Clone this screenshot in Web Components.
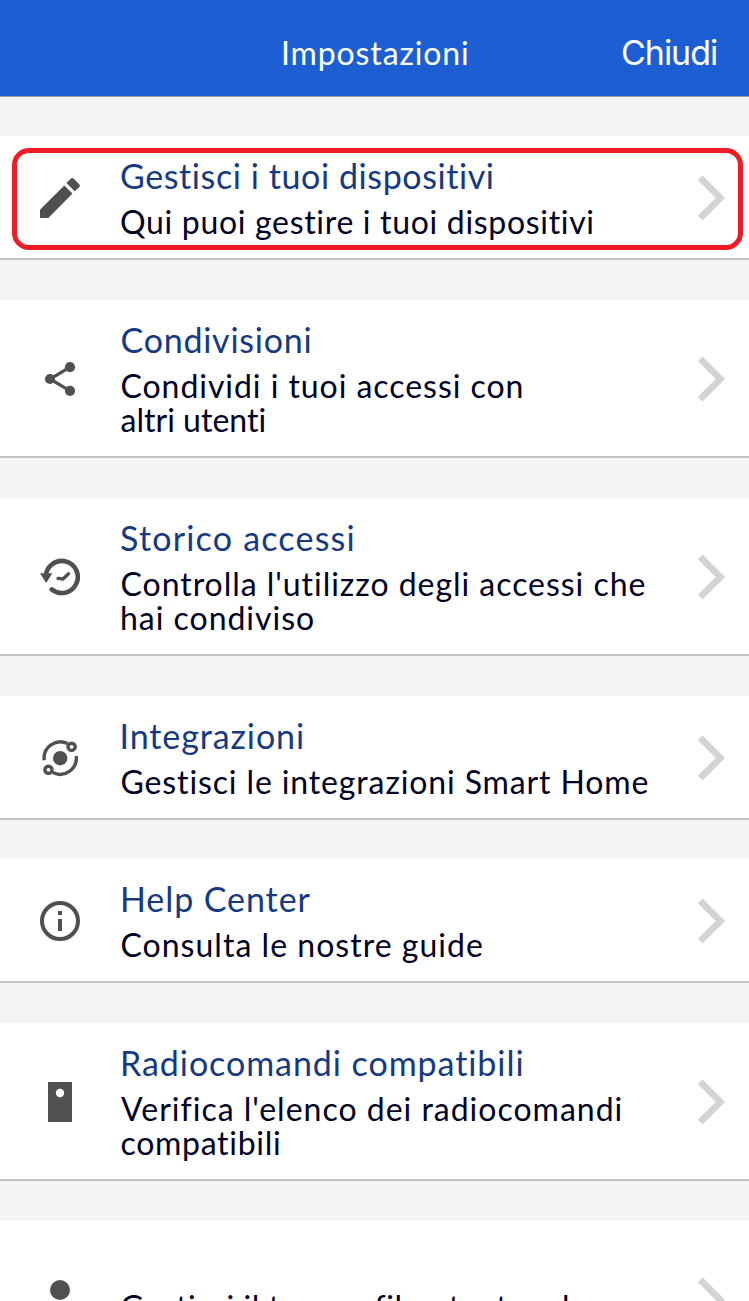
<!DOCTYPE html>
<html lang="it">
<head>
<meta charset="utf-8">
<title>Impostazioni</title>
<style>
  html, body {
    margin: 0;
    height: 1301px;
    overflow: hidden;
    background: #f4f4f4;
    font-family: Lato, "Open Sans", sans-serif;
  }
</style>
</head>
<body>
<settings-screen>
  <nav-bar slot="bar">
    <fit-line from="283" to="467">Impostazioni</fit-line>
    <fit-line slot="action" from="623" to="717">Chiudi</fit-line>
  </nav-bar>

  <settings-row icon="edit" highlighted>
    <fit-line slot="title" from="121" to="494">Gestisci i tuoi dispositivi</fit-line>
    <fit-line from="121" to="593.5">Qui puoi gestire i tuoi dispositivi</fit-line>
  </settings-row>
  <settings-row icon="share">
    <fit-line slot="title" from="121.5" to="310.5">Condivisioni</fit-line>
    <fit-line from="121.5" to="521.5">Condividi i tuoi accessi con</fit-line>
    <fit-line from="121.5" to="265">altri utenti</fit-line>
  </settings-row>
  <settings-row icon="history">
    <fit-line slot="title" from="121" to="353.5">Storico accessi</fit-line>
    <fit-line from="121.5" to="645">Controlla l'utilizzo degli accessi che</fit-line>
    <fit-line from="122" to="313">hai condiviso</fit-line>
  </settings-row>
  <settings-row icon="integration" style="--gap: 39px">
    <fit-line slot="title" from="122.5" to="303">Integrazioni</fit-line>
    <fit-line from="121.5" to="648">Gestisci le integrazioni Smart Home</fit-line>
  </settings-row>
  <settings-row icon="info">
    <fit-line slot="title" from="123" to="310.5">Help Center</fit-line>
    <fit-line from="121.5" to="482">Consulta le nostre guide</fit-line>
  </settings-row>
  <settings-row icon="remote">
    <fit-line slot="title" from="123" to="523">Radiocomandi compatibili</fit-line>
    <fit-line from="121" to="620">Verifica l'elenco dei radiocomandi</fit-line>
    <fit-line from="121.5" to="279.5">compatibili</fit-line>
  </settings-row>
  <settings-row icon="person">
    <fit-line from="121.5" to="567.5">Gestisci il tuo profilo utente ed</fit-line>
    <fit-line></fit-line>
  </settings-row>
</settings-screen>

<script>
// 40x40 glyphs, drawn with currentColor
const ICONS = {
  edit: `<path d="M0 31.7V40h8.3L32.5 15.6l-8.2-8.2zM39.2 9.3c.9-.9.9-2.2 0-3.1L33.8.7c-.9-.9-2.2-.9-3.1 0L26.4 5l8.3 8.3z"/>`,
  share: `<path d="M30 8.2L10 20l20 11.8" fill="none" stroke="currentColor" stroke-width="3.2"/>
    <circle cx="30" cy="8.2" r="5.1"/><circle cx="10" cy="20" r="5.1"/><circle cx="30" cy="31.8" r="5.1"/>`,
  history: `<path d="M5.8 19.2A16 16 0 1 1 11.7 32.4" fill="none" stroke="currentColor" stroke-width="4.6" stroke-linecap="round"/>
    <path d="M0 16.2h12.4L6.2 26z"/>
    <path d="M18 21.4l5 .6 5.5-5.3" fill="none" stroke="currentColor" stroke-width="3.4" stroke-linecap="round" stroke-linejoin="round"/>`,
  integration: `<g fill="none" stroke="currentColor" stroke-width="3.4">
      <path d="M4.2 22.2A16.3 16.3 0 0 1 27.6 5.6M36.2 18A16.3 16.3 0 0 1 12.8 34.6"/>
      <circle cx="31.6" cy="8.8" r="3.6"/><circle cx="8.5" cy="31.8" r="3.6"/>
    </g><circle cx="20.2" cy="20.2" r="7.2"/>`,
  info: `<circle cx="20" cy="20" r="18" fill="none" stroke="currentColor" stroke-width="4"/><path d="M18 10h4v4h-4zM18 18h4v12h-4z"/>`,
  remote: `<path fill-rule="evenodd" d="M8 0h24v40H8zM20 6.8a4.2 4.2 0 1 0 0 8.4 4.2 4.2 0 0 0 0-8.4z"/>`,
  person: `<circle cx="20" cy="10" r="10"/><path d="M0 40v-5c0-7 13-10 20-10s20 3 20 10v5z"/>`,
};

// One line of text, tracked so that its ink runs from "from" to "to"
class FitLine extends HTMLElement {
  constructor() {
    super();
    const shadow = this.attachShadow({ mode: "open" });
    shadow.innerHTML = `
      <style>
        :host {
          display: block;
          white-space: nowrap;
          min-height: 1lh;
          font-kerning: normal;
          font-variant-ligatures: none;
        }
      </style>
      <slot></slot>`;
  }

  connectedCallback() {
    const text = this.textContent;
    if (!text) return;
    const from = parseFloat(this.getAttribute("from"));
    const to = parseFloat(this.getAttribute("to"));
    const css = getComputedStyle(this);
    const ctx = document.createElement("canvas").getContext("2d");
    ctx.font = `${css.fontWeight} ${css.fontSize} ${css.fontFamily}`;
    const ink = ctx.measureText(text);
    const natural = ink.actualBoundingBoxLeft + ink.actualBoundingBoxRight;
    const spacing = (to - from - natural) / (text.length - 1);
    this.style.letterSpacing = `${spacing.toFixed(3)}px`;
    this.style.marginLeft = `${(from + ink.actualBoundingBoxLeft).toFixed(2)}px`;
  }
}

class NavBar extends HTMLElement {
  constructor() {
    super();
    const shadow = this.attachShadow({ mode: "open" });
    shadow.innerHTML = `
      <style>
        :host {
          display: grid;
          align-items: center;
          box-sizing: border-box;
          height: 97px;
          padding-top: 9px;
          border-bottom: 1px solid #9a9fa8;
          background: #1d5fd3;
          color: #fff;
        }
        slot {
          display: block;
          grid-area: 1 / 1;
          line-height: 40px;
        }
        .title { font-size: 32px; }
        .action {
          font-family: Inter, Roboto, sans-serif;
          font-size: 34px;
          font-weight: 400;
        }
      </style>
      <slot class="title"></slot>
      <slot class="action" name="action"></slot>`;
  }
}

class SettingsRow extends HTMLElement {
  constructor() {
    super();
    const shadow = this.attachShadow({ mode: "open" });
    shadow.innerHTML = `
      <style>
        :host {
          display: grid;
          grid-template-columns: minmax(0, 1fr);
          align-items: center;
          position: relative;
          margin-bottom: var(--gap, 40px);
          border-bottom: 2px solid #c4c4c4;
          background: #fff;
        }
        .text, .marks { grid-area: 1 / 1; }
        .text { padding: 20px 0 19px; }
        .title {
          display: block;
          min-height: 40px;
          margin-bottom: 9px;
          font-size: 34px;
          line-height: 40px;
          color: #16397f;
        }
        .detail {
          display: block;
          font-size: 32px;
          line-height: 34px;
          color: #000022;
        }
        .marks {
          display: flex;
          align-items: center;
          justify-content: space-between;
          padding: 2px 22px 0 40px;
        }
        svg { display: block; }
        .icon { width: 40px; height: 40px; color: #505050; }
        .chevron { width: 30px; height: 48px; }
        :host([highlighted])::after {
          content: "";
          position: absolute;
          inset: 12px 6px 8px 12px;
          border: 5px solid #ee1c25;
          border-radius: 17px;
        }
      </style>
      <div class="marks">
        <svg class="icon" viewBox="0 0 40 40" fill="currentColor">${ICONS[this.getAttribute("icon")] ?? ""}</svg>
        <svg class="chevron" viewBox="0 0 30 48"><path d="M3.2 3.8L23.4 24 3.2 44.2" fill="none" stroke="#d3d3d3" stroke-width="6.6"/></svg>
      </div>
      <div class="text">
        <slot class="title" name="title"></slot>
        <slot class="detail"></slot>
      </div>`;
  }
}

class SettingsScreen extends HTMLElement {
  constructor() {
    super();
    const shadow = this.attachShadow({ mode: "open" });
    shadow.innerHTML = `
      <style>
        :host { display: block; height: 1301px; overflow: hidden; }
        .list { display: flex; flex-direction: column; padding-top: 39px; }
      </style>
      <slot name="bar"></slot>
      <div class="list"><slot></slot></div>`;
  }
}

customElements.define("settings-screen", SettingsScreen);
customElements.define("nav-bar", NavBar);
customElements.define("settings-row", SettingsRow);
// last, so the slots already hand down their font sizes
customElements.define("fit-line", FitLine);
</script>
</body>
</html>
